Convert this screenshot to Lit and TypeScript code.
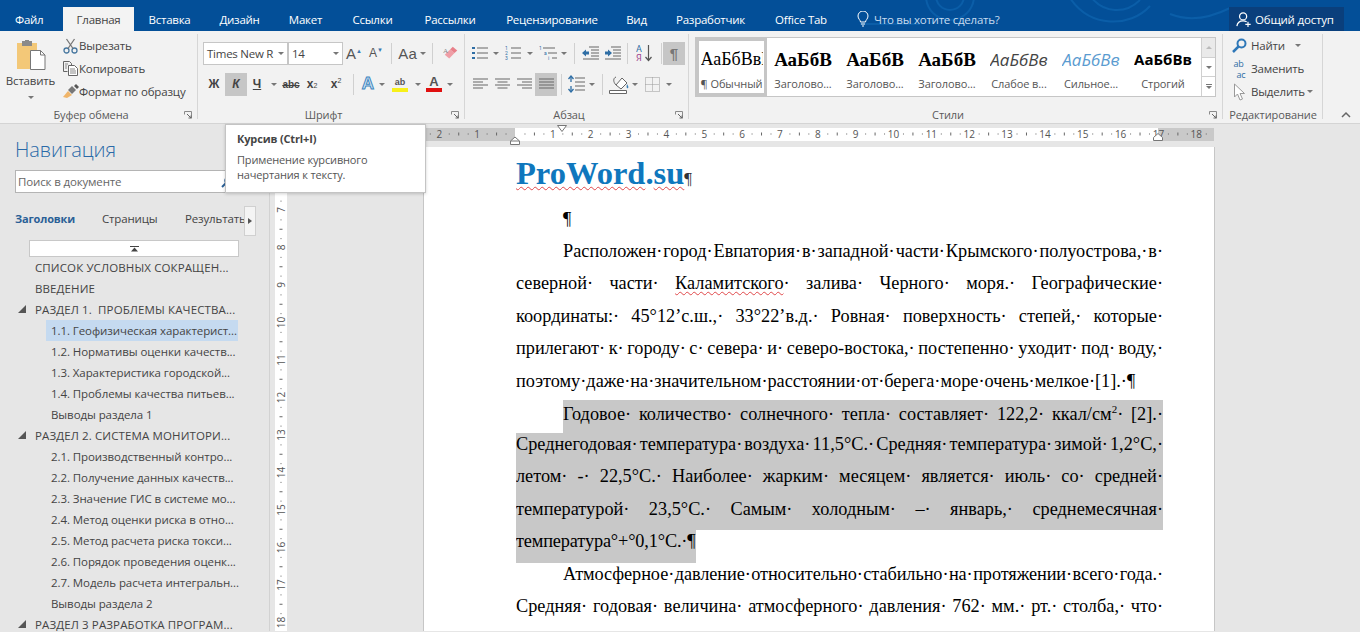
import { LitElement, html, css, svg } from "lit";
import { customElement } from "lit/decorators.js";

const cell = (w: number, c: unknown, cls = "") => html`<span class="cell ${cls}" style="width:${w}px">${c}</span>`;
const caret = html`<i class="caret"></i>`;
const sep = html`<i class="sep"></i>`;
const launcher = html`<svg class="launch" width="8" height="8" viewBox="0 0 8 8"><path d="M.5 .5h7v7M.5 .5v3M.5 .5" fill="none" stroke="#8a8a8a"/><path d="M3 3l4 4M4.5 7H7V4.5" fill="none" stroke="#666"/></svg>`;

const icPaste = html`<svg width="30" height="30" viewBox="0 0 30 30"><rect x="1" y="3" width="20" height="26" fill="#f3c878"/><rect x="6" y="1" width="10" height="5" fill="#8a8a8a"/><rect x="9" y="0" width="4" height="2" fill="#8a8a8a"/><path d="M14.500 10.500h10l4.500 4.500v14.500h-14.500z" fill="#fff" stroke="#777"/><path d="M24.500 10.500v4.500h4.500" fill="none" stroke="#777"/></svg>`;
const icCut = html`<svg width="15" height="16" viewBox="0 0 15 16"><circle cx="3.500" cy="12.500" r="2.500" fill="none" stroke="#47779f" stroke-width="1.300"/><circle cx="11.500" cy="12.500" r="2.500" fill="none" stroke="#47779f" stroke-width="1.300"/><path d="M5 10.500L11.500 1M10 10.500L3.500 1" stroke="#777" stroke-width="1.300" fill="none"/></svg>`;
const icCopy = html`<svg width="15" height="15" viewBox="0 0 15 15"><path d="M.5 .5h6l2 2v2M.5 .5v10h4" fill="none" stroke="#666"/><path d="M5.500 4.500h6l3 3v7h-9z" fill="#fff" stroke="#666"/><path d="M7 8h5M7 10h6M7 12h6M2 3h3M2 5h2M2 7h2" stroke="#888"/></svg>`;
const icBrush = html`<svg width="17" height="15" viewBox="0 0 17 15"><path d="M1 13l5-6 4 4-5 3z" fill="#f0b56a"/><path d="M6 6l4-4 4 4-4 4z" fill="#777"/><path d="M12 2l2-2 3 3-2 2z" fill="#555"/></svg>`;
const icEraser = html`<svg class="shift" width="18" height="17" viewBox="0 0 18 17"><path d="M2 10L8 4l5 4-6 6z" fill="#ef9ea6"/><path d="M8 4l3-3 5 4-3 3z" fill="#e8808a"/><text x="0" y="8" font-size="8" fill="#888" font-family="Liberation Serif">A</text></svg>`;
const icBullets = html`<svg width="16" height="16" viewBox="0 0 16 16"><path d="M5 3h11M5 8h11M5 13h11" stroke="#666"/><path d="M0 2h3v2H0zM0 7h3v2H0zM0 12h3v2H0z" fill="#2f6ea5"/></svg>`;
const icNum = html`<svg width="16" height="16" viewBox="0 0 16 16"><path d="M6 3h10M6 8h10M6 13h10" stroke="#666"/><text x="0" y="5" font-size="5" fill="#2f6ea5" font-family="Roboto">1</text><text x="0" y="10" font-size="5" fill="#2f6ea5" font-family="Roboto">2</text><text x="0" y="15" font-size="5" fill="#2f6ea5" font-family="Roboto">3</text></svg>`;
const icMulti = html`<svg width="20" height="16" viewBox="0 0 20 16"><path d="M4 3h12M9 8h9M13 13h5" stroke="#666"/><text x="0" y="5" font-size="5" fill="#2f6ea5" font-family="Roboto">1</text><text x="5" y="10" font-size="5" fill="#2f6ea5" font-family="Roboto">a</text><text x="9" y="15" font-size="5" fill="#2f6ea5" font-family="Roboto">i</text></svg>`;
const icOut = html`<svg width="17" height="14" viewBox="0 0 17 14"><path d="M7 1h10M9 4h8M9 7h8M9 10h8M1 13h16" stroke="#666"/><path d="M0 7l4-3.500v2h3v3h-3v2z" fill="#2f6ea5"/></svg>`;
const icIn = html`<svg width="17" height="14" viewBox="0 0 17 14"><path d="M7 1h10M9 4h8M9 7h8M9 10h8M1 13h16" stroke="#666"/><path d="M8 7l-4-3.500v2H1v3h3v2z" fill="#2f6ea5"/></svg>`;
const icSort = html`<svg width="17" height="20" viewBox="0 0 17 20"><text x="0" y="9" font-size="9" fill="#2f6ea5" font-family="Roboto">А</text><text x="0" y="18" font-size="9" fill="#a0478f" font-family="Roboto">Я</text><path d="M12.500 2v15M9.500 14l3 3.500 3-3.500" stroke="#555" fill="none" stroke-width="1.200"/></svg>`;
const al = (d: string) => html`<svg width="15" height="14" viewBox="0 0 15 14"><path d="${d}" stroke="#666" fill="none"/></svg>`;
const icLine = html`<svg width="17" height="18" viewBox="0 0 17 18"><path d="M7 3h10M7 7h10M7 11h10M7 15h10" stroke="#666"/><path d="M3 1v6M3 11v6" stroke="#2f6ea5" stroke-width="1.300"/><path d="M.5 4L3 1l2.500 3M.5 14L3 17l2.500-3" fill="none" stroke="#2f6ea5" stroke-width="1.300"/></svg>`;
const icFill = html`<svg width="20" height="20" viewBox="0 0 20 20"><path d="M7 11l6-7 5 5-6 6z" fill="#fff" stroke="#666"/><path d="M7 3c-3 1-3 5 0 8" fill="none" stroke="#666"/><path d="M18 10c1 2 2 3 1 4s-2 0-1-4z" fill="#3d7fb5"/><path d="M.5 16.500h17v3H.5z" fill="#fff" stroke="#666"/></svg>`;
const icBorders = html`<svg width="15" height="15" viewBox="0 0 15 15"><path d="M.5 .5h14v14H.5zM7.500 .5v14M.5 7.500h14" fill="none" stroke="#999" stroke-dasharray="1 1"/></svg>`;
const icFind = html`<svg width="15" height="15" viewBox="0 0 15 15"><circle cx="9.500" cy="5.500" r="4" fill="none" stroke="#2f78b8" stroke-width="2"/><path d="M6.500 8.500L1 14" stroke="#2f78b8" stroke-width="2.500"/></svg>`;
const icReplace = html`<span class="abac"><b>ab</b><u>ac</u></span>`;
const icSelect = html`<svg width="13" height="18" viewBox="0 0 13 18"><path d="M1.500 1v13l3-3 2.500 6 2.500-1-2.500-5.500h4.500z" fill="#fff" stroke="#999"/></svg>`;
const icShare = html`<svg width="16" height="17" viewBox="0 0 18 18"><circle cx="8" cy="5.500" r="4" fill="none" stroke="#fff" stroke-width="1.400"/><path d="M1 16.500c.5-4 3-6 7-6 2 0 3 .5 4 1" fill="none" stroke="#fff" stroke-width="1.400"/><path d="M13.500 11.500v6M10.500 14.500h6" stroke="#fff" stroke-width="1.300"/></svg>`;
const icBulb = html`<svg width="12" height="16" viewBox="0 0 12 16"><path d="M3.500 11c0-2-2.500-3-2.500-6a5 5 0 0 1 10 0c0 3-2.500 4-2.500 6z" fill="none" stroke="#fff"/><path d="M4 13h4M5 15h2" stroke="#fff"/></svg>`;

const tabs: [string, number][] = [["Файл", 63], ["Главная", 71], ["Вставка", 71], ["Дизайн", 69], ["Макет", 63], ["Ссылки", 71], ["Рассылки", 84], ["Рецензирование", 120], ["Вид", 49], ["Разработчик", 99], ["Office Tab", 82]];

const gallery: [string, string, string][] = [
  ["АаБбВвГ", "¶ Обычный", "s-normal sel"],
  ["АаБбВ", "Заголово...", "s-head"],
  ["АаБбВ", "Заголово...", "s-head"],
  ["АаБбВ", "Заголово...", "s-head"],
  ["АаБбВв", "Слабое в...", "s-weak"],
  ["АаБбВв", "Сильное...", "s-strong"],
  ["АаБбВв", "Строгий", "s-bold"],
];

const tree: [string, number, boolean, boolean][] = [
  ["СПИСОК УСЛОВНЫХ СОКРАЩЕН...", 1, false, false],
  ["ВВЕДЕНИЕ", 1, false, false],
  ["РАЗДЕЛ 1.  ПРОБЛЕМЫ КАЧЕСТВА...", 1, true, false],
  ["1.1. Геофизическая характерист...", 2, false, true],
  ["1.2. Нормативы оценки качеств...", 2, false, false],
  ["1.3. Характеристика городской...", 2, false, false],
  ["1.4. Проблемы качества питьев...", 2, false, false],
  ["Выводы раздела 1", 2, false, false],
  ["РАЗДЕЛ 2. СИСТЕМА МОНИТОРИ...", 1, true, false],
  ["2.1. Производственный контро...", 2, false, false],
  ["2.2. Получение данных качеств...", 2, false, false],
  ["2.3. Значение ГИС в системе мо...", 2, false, false],
  ["2.4. Метод оценки риска в отно...", 2, false, false],
  ["2.5. Метод расчета риска токси...", 2, false, false],
  ["2.6. Порядок проведения оценк...", 2, false, false],
  ["2.7. Модель расчета интегральн...", 2, false, false],
  ["Выводы раздела 2", 2, false, false],
  ["РАЗДЕЛ 3 РАЗРАБОТКА ПРОГРАМ...", 1, true, false],
];

const U = 37.85;
const hRuler = () => {
  const x0 = 245;
  const items = [];
  for (let n = -3; n <= 18; n++) {
    const x = x0 + U * n;
    if (n !== 0 && x > 150) items.push(svg`<text x="${x}" y="13.500" text-anchor="middle" font-size="10" fill="#555" font-family="Open Sans">${Math.abs(n)}</text>`);
    for (const [f, h] of [[0.25, 1], [0.5, 3], [0.75, 1]]) {
      const tx = x + U * f;
      if (tx > 156 && tx < 944) items.push(svg`<rect x="${tx}" y="${10 - h / 2}" width="1" height="${h}" fill="#666"/>`);
    }
  }
  return html`<svg class="hr" width="1090" height="23" viewBox="0 0 1090 23">
    <rect x="156" y="4" width="788" height="13" fill="#fff"/>
    <rect x="156" y="4" width="89" height="13" fill="#c9c9c9"/>
    <rect x="888" y="4" width="56" height="13" fill="#c9c9c9"/>
    ${items}
    <path d="M287.500 1.500h9l-4.500 6z" fill="#fff" stroke="#777"/>
    <path d="M240.500 20.500v-3.500l4.500-4 4.500 4v3.500zM240.500 17h9" fill="#fff" stroke="#777"/>
    <path d="M883.500 16.500v-3l4.500-4 4.500 4v3z" fill="#fff" stroke="#777"/>
  </svg>`;
};
const vRuler = () => {
  const items = [];
  for (let n = 7; n <= 18; n++) {
    const y = 211 - 148 + 37.5 * (n - 7);
    items.push(svg`<text transform="translate(10 ${y}) rotate(-90)" text-anchor="middle" font-size="10" fill="#555" font-family="Open Sans">${n}</text>`);
    for (const [f, w] of [[0.25, 1], [0.5, 3], [0.75, 1]]) {
      items.push(svg`<rect x="${6 - w / 2}" y="${y - 37.5 * f}" width="${w}" height="1" fill="#666"/>`);
    }
  }
  return html`<svg class="vr" width="12" height="484" viewBox="0 0 12 484"><rect width="12" height="484" fill="#fff"/>${items}</svg>`;
};

@customElement("app-root")
class AppRoot extends LitElement {
  static styles = css`
    :host { display: block; width: 1360px; height: 632px; overflow: hidden; position: relative; background: #e6e6e6; font-family: "Open Sans", sans-serif; font-size: 11.5px; color: #444; }
    * { box-sizing: border-box; }
    .top { height: 31px; background: #034f98; display: flex; align-items: flex-end; position: relative; color: #fff; overflow: hidden; }
    .swirl { position: absolute; left: 840px; top: 0; pointer-events: none; }
    .tab { height: 24px; display: flex; align-items: center; justify-content: center; font-size: 11.5px; letter-spacing: -.25px; position: relative; }
    .tab.first { justify-content: flex-start; padding-left: 15px; }
    .tab.on { background: #f3f3f3; color: #444; }
    .tell { display: flex; align-items: center; gap: 5px; height: 24px; padding-left: 15px; font-size: 11.5px; letter-spacing: -.25px; color: #c7dcf0; position: relative; }
    .share { position: absolute; left: 1229px; top: 7px; width: 115px; height: 24px; background: #0a3f7c; display: flex; align-items: center; gap: 3px; padding-left: 7px; font-size: 11.5px; letter-spacing: -.2px; }
    .ribbon { height: 93px; background: #f2f2f2; border-bottom: 1px solid #d4d4d4; display: flex; position: relative; }
    .g { position: relative; display: flex; flex-direction: column; }
    .g::after { content: ""; position: absolute; right: 0; top: 3px; bottom: 4px; width: 1px; background: #d6d6d6; }
    .g1 { width: 198px; } .g2 { width: 267px; } .g3 { width: 224px; } .g4 { width: 534px; } .g5 { width: 100px; }
    .glabel { position: absolute; left: 0; right: 16px; top: 76px; height: 16px; line-height: 16px; text-align: center; font-size: 11px; letter-spacing: -.1px; color: #5a5a5a; }
    .g5 .glabel { right: 0; }
    .launch { position: absolute; right: 6px; top: 80px; }
    .rows { display: flex; flex-direction: column; gap: 9px; padding: 11px 0 0 5px; }
    .row { display: flex; height: 22px; align-items: center; }
    .cell { display: inline-flex; align-items: center; justify-content: center; height: 23px; flex: none; }
    .on { background: #c6c6c6; }
    .shift { margin-left: 6px; }
    .caret { display: inline-block; width: 0; height: 0; border-left: 3px solid transparent; border-right: 3px solid transparent; border-top: 3px solid #777; }
    .sep { display: block; width: 1px; height: 21px; background: #d0d0d0; }
    .clip { display: flex; padding-top: 3px; }
    .paste { width: 60px; display: flex; flex-direction: column; align-items: center; padding: 6px 0 0 1px; letter-spacing: -.2px; }
    .paste .t { margin-top: 3px; line-height: 16px; }
    .paste .caret { margin-top: 7px; }
    .small { display: flex; flex-direction: column; margin-left: 2px; }
    .small div { height: 23px; display: flex; align-items: center; white-space: nowrap; letter-spacing: -.15px; }
    .small .ic { width: 17px; display: flex; justify-content: center; margin-right: 0; }
    .combo { background: #fff; border: 1px solid #c6c6c6; height: 23px; display: flex; align-items: center; padding: 0 3px 0 3px; justify-content: space-between; font-size: 11.5px; letter-spacing: -.25px; }
    .bi { font-family: "Liberation Sans", sans-serif; font-weight: 700; font-size: 12px; color: #444; }
    .it { font-style: italic; }
    .ul { text-decoration: underline; }
    .ser { font-family: "Liberation Sans", sans-serif; color: #555; }
    .big { font-size: 15px; } .mid { font-size: 12px; }
    .tiny { font-size: 6px; vertical-align: super; color: #3a78b0; }
    .abc { font-size: 10px; text-decoration: line-through; color: #444; font-family: "Liberation Sans", sans-serif; font-weight: 700; }
    .x { font-family: "Liberation Sans", sans-serif; font-weight: 700; font-size: 12px; color: #444; }
    .x small { font-size: 7px; font-weight: 400; }
    .x sup { font-size: 7px; font-weight: 400; line-height: 0; }
    .bar { display: inline-flex; flex-direction: column; align-items: center; font-family: "Liberation Sans", sans-serif; font-size: 13px; font-weight: 700; line-height: 12px; }
    .bar.red { color: #555; } .bar.red::after { content: ""; width: 16px; height: 4px; background: #e01010; }
    .bar.yel { font-size: 9px; color: #555; line-height: 11px; } .bar.yel::after { content: ""; width: 16px; height: 4px; background: #f7f01a; }
    .outa { font-family: "Liberation Sans", sans-serif; font-size: 17px; font-weight: 700; color: #d4e6f5; -webkit-text-stroke: 1px #3f86c0; }
    .pil { font-family: "Liberation Sans", sans-serif; font-size: 15px; font-weight: 700; color: #777; }
    .gallery { position: absolute; left: 6px; top: 6px; width: 521px; height: 60px; background: #fff; border: 1px solid #c6c6c6; display: flex; }
    .st { width: 72px; height: 58px; display: flex; flex-direction: column; align-items: center; overflow: hidden; flex: none; padding-top: 10px; }
    .st:first-child { width: 71px; }
    .st.sel { border: 3px solid #c6c6c6; padding-top: 7px; }
    .st .s { height: 26px; line-height: 23px; white-space: nowrap; overflow: hidden; color: #000; max-width: 62px; font-size: 18px; font-family: "Liberation Serif", serif; }
    .st .l { font-size: 11px; letter-spacing: -.1px; line-height: 16px; margin-top: 2px; white-space: nowrap; color: #555; }
    .s-head .s { font-weight: 700; font-size: 19px; max-width: 66px; }
    .s-weak .s { font-family: "Open Sans", sans-serif; font-style: italic; font-size: 17px; color: #444; }
    .s-strong .s { font-family: "Open Sans", sans-serif; font-style: italic; font-size: 17px; color: #5a9bd0; }
    .s-bold .s { font-family: "Open Sans", sans-serif; font-weight: 700; font-size: 15px; max-width: 58px; }
    .scroll { width: 14px; margin-left: auto; border-left: 1px solid #d0d0d0; display: flex; flex-direction: column; }
    .scroll span { flex: 1; display: flex; align-items: center; justify-content: center; border-bottom: 1px solid #d0d0d0; }
    .scroll span:first-child { background: #eaeaea; }
    .scroll span:first-child .caret { transform: rotate(180deg); border-top-color: #bbb; }
    .scroll .last { flex-direction: column; border-bottom: 0; gap: 1px; }
    .scroll .last::before { content: ""; width: 6px; height: 1px; background: #777; }
    .edit { display: flex; flex-direction: column; padding: 3px 0 0 9px; }
    .edit div { height: 23px; display: flex; align-items: center; letter-spacing: -.2px; gap: 4px; }
    .edit .ic { width: 15px; display: flex; justify-content: center; }
    .edit .caret { margin-left: 6px; }
    .edit .tight .caret { margin-left: -2px; }
    .abac { display: flex; flex-direction: column; font-size: 9px; line-height: 11px; color: #2f6ea5; }
    .abac b { font-weight: 400; } .abac u { text-decoration: none; margin-left: 3px; }
    .collapse { position: absolute; left: 1341px; top: 80px; }
    .main { display: flex; height: 507px; }
    .nav { width: 270px; flex: none; border-right: 1px solid #d2d2d2; padding: 12px 0 0 15px; display: flex; flex-direction: column; overflow: hidden; }
    .nav > * { flex: none; }
    .nav h1 { margin: 0; font-weight: 300; font-size: 20px; line-height: 28px; color: #2a6aa8; letter-spacing: -.1px; }
    .search { width: 235px; height: 23px; background: #fff; border: 1px solid #b4b4b4; margin-top: 6px; display: flex; align-items: center; padding-left: 2px; color: #666; justify-content: space-between; letter-spacing: -.15px; }
    .search svg { margin-right: 16px; }
    .ntabs { display: flex; align-items: center; height: 30px; margin-top: 10px; position: relative; letter-spacing: -.15px; white-space: nowrap; }
    .ntabs b { color: #2a5f96; width: 87px; font-weight: 700; font-size: 11px; }
    .ntabs span { width: 83px; }
    .more { position: absolute; left: 229px; top: 3px; width: 12px; height: 30px; background: #f4f4f4; border: 1px solid #d0d0d0; display: flex; align-items: center; justify-content: center; }
    .more i { border-top: 3px solid transparent; border-bottom: 3px solid transparent; border-left: 4px solid #555; }
    .collapser { width: 210px; height: 17px; background: #fff; border: 1px solid #c8c8c8; margin: 7px 0 0 14px; display: flex; align-items: center; justify-content: center; }
    .tree { margin: 0; padding: 0; list-style: none; }
    .node { height: 21px; display: flex; align-items: center; white-space: pre; color: #444; position: relative; width: 223px; }
    .l1 { padding-left: 20px; letter-spacing: .12px; }
    .l2 { padding-left: 36px; letter-spacing: -.08px; }
    .node.sel::before { content: ""; position: absolute; left: 31px; right: 0; top: 0; bottom: 0; background: #c5daf0; }
    .node span { position: relative; }
    .node svg { position: absolute; left: 3px; top: 6px; }
    .ws { flex: 1; display: flex; flex-direction: column; min-width: 0; }
    .hr { display: block; flex: none; }
    .wsrow { display: flex; flex: 1; min-height: 0; }
    .vr { margin-left: 5px; flex: none; display: block; }
    .page { width: 792px; margin-left: 136px; flex: none; background: #fff; border-left: 1px solid #c6c6c6; border-right: 1px solid #c6c6c6; padding: 8px 51px 0 92px; height: 484px; overflow: hidden; color: #000; font-family: "Liberation Serif", serif; }
    .title { height: 36px; display: flex; align-items: baseline; font-weight: 700; font-size: 32.500px; line-height: 36px; color: #0f77bd; white-space: nowrap; }
    .title .pm { font-size: 17px; color: #333; font-weight: 400; }
    .wavy { text-decoration: underline wavy #e0484a 1px; text-underline-offset: 2px; text-decoration-skip-ink: none; }
    .par { font-size: 18.300px; line-height: 23.500px; word-spacing: -.25em; }
    .empty { margin: 16.500px 0 0 47px; height: 30px; }
    .ln { display: block; height: 32.500px; text-align: justify; text-align-last: justify; overflow: hidden; }
    .ln.lo { line-height: 27px; }
    .ln.lo2 { line-height: 28.500px; }
    .ln.ind { margin-left: 47px; }
    .ln.sq { letter-spacing: -.09px; }
    .ln.end { text-align: left; text-align-last: left; white-space: nowrap; }
    .hl { background: #c8c8c8; }
    .ln.fit { width: 180px; letter-spacing: -.15px; }
    .par sup { font-size: 11px; line-height: 0; }
    .tip { position: absolute; left: 225px; top: 124px; width: 201px; height: 69px; background: #fff; border: 1px solid #c4c4c4; box-shadow: 0 1px 3px rgba(0,0,0,.18); padding: 6px 11px; font-size: 11px; letter-spacing: -.15px; color: #555; line-height: 15px; }
    .tip b { display: block; font-weight: 700; color: #444; margin-bottom: 6px; }
  `;

  render() {
    return html`
      <div class="top">
        <svg class="swirl" width="400" height="31" viewBox="0 0 400 31" fill="none" stroke="#0b5ea8" stroke-width="2"><circle cx="110" cy="-4" r="24"/><circle cx="110" cy="-4" r="14"/><path d="M230-2c20 30 60 30 80 8M250-4c14 18 36 18 50 4M20 24h60M330 14c20 8 40 4 60-6"/></svg>
        ${tabs.map(([t, w], i) => html`<div class="tab ${i === 0 ? "first" : ""} ${i === 1 ? "on" : ""}" style="width:${w}px">${t}</div>`)}
        <div class="tell">${icBulb}<span>Что вы хотите сделать?</span></div>
        <div class="share">${icShare}<span>Общий доступ</span></div>
      </div>
      <div class="ribbon">
        <section class="g g1">
          <div class="clip">
            <div class="paste">${icPaste}<span class="t">Вставить</span>${caret}</div>
            <div class="small">
              <div><span class="ic">${icCut}</span>Вырезать</div>
              <div><span class="ic">${icCopy}</span>Копировать</div>
              <div><span class="ic">${icBrush}</span>Формат по образцу</div>
            </div>
          </div>
          <div class="glabel">Буфер обмена</div>${launcher}
        </section>
        <section class="g g2">
          <div class="rows">
            <div class="row">
              ${cell(85, html`<span class="combo" style="width:85px">Times New R ${caret}</span>`)}
              ${cell(55, html`<span class="combo" style="width:55px">14 ${caret}</span>`)}
              ${cell(22, html`<span class="ser big">A<span class="tiny">▲</span></span>`)}
              ${cell(22, html`<span class="ser mid">A<span class="tiny">▼</span></span>`)}
              ${cell(9, sep)}
              ${cell(32, html`<span class="ser big">Аа</span>&nbsp;${caret}`)}
              ${cell(9, sep)}
              ${cell(22, icEraser)}
            </div>
            <div class="row">
              ${cell(22, html`<span class="bi">Ж</span>`)}
              ${cell(22, html`<span class="bi it">К</span>`, "on")}
              ${cell(20, html`<span class="bi ul">Ч</span>`)}
              ${cell(14, caret)}
              ${cell(20, html`<span class="abc">abc</span>`)}
              ${cell(22, html`<span class="x">x<small>2</small></span>`)}
              ${cell(26, html`<span class="x">x<sup>2</sup></span>`)}
              ${cell(8, sep)}
              ${cell(22, html`<span class="outa">A</span>`)}
              ${cell(6, caret)}
              ${cell(30, html`<span class="bar yel">ab</span>`)}
              ${cell(6, caret)}
              ${cell(26, html`<span class="bar red">A</span>`)}
              ${cell(6, caret)}
            </div>
          </div>
          <div class="glabel">Шрифт</div>${launcher}
        </section>
        <section class="g g3">
          <div class="rows">
            <div class="row">
              ${cell(20, icBullets)}${cell(12, caret)}${cell(22, icNum)}${cell(12, caret)}${cell(25, icMulti)}${cell(6, caret)}
              ${cell(14, sep)}${cell(18, icOut)}${cell(26, icIn)}${cell(4, sep)}${cell(30, icSort)}${cell(4, sep)}
              ${cell(22, html`<span class="pil">¶</span>`, "on")}
            </div>
            <div class="row">
              ${cell(20, al("M0 2h15M0 5h10M0 8h15M0 11h10"))}
              ${cell(24, al("M0 2h15M2.500 5h10M0 8h15M2.500 11h10"))}
              ${cell(20, al("M0 2h15M5 5h10M0 8h15M5 11h10"))}
              ${cell(1, "")}
              ${cell(22, al("M0 2h15M0 5h15M0 8h15M0 11h15"), "on")}
              ${cell(8, sep)}${cell(22, icLine)}${cell(9, caret)}${cell(12, sep)}${cell(22, icFill)}${cell(10, caret)}${cell(25, icBorders)}${cell(8, caret)}
            </div>
          </div>
          <div class="glabel">Абзац</div>${launcher}
        </section>
        <section class="g g4">
          <div class="gallery">
            ${gallery.map(([s, l, c]) => html`<div class="st ${c}"><span class="s">${s}</span><span class="l">${l}</span></div>`)}
            <div class="scroll"><span>${caret}</span><span>${caret}</span><span class="last">${caret}</span></div>
          </div>
          <div class="glabel">Стили</div>${launcher}
        </section>
        <section class="g g5">
          <div class="edit">
            <div><span class="ic">${icFind}</span>Найти ${caret}</div>
            <div><span class="ic">${icReplace}</span>Заменить</div>
            <div class="tight"><span class="ic">${icSelect}</span>Выделить${caret}</div>
          </div>
          <div class="glabel">Редактирование</div>
        </section>
        <svg class="collapse" width="10" height="7" viewBox="0 0 10 7"><path d="M1 6l4-4 4 4" fill="none" stroke="#666" stroke-width="1.500"/></svg>
      </div>
      <div class="main">
        <aside class="nav">
          <h1>Навигация</h1>
          <div class="search"><span>Поиск в документе</span><svg width="12" height="12" viewBox="0 0 12 12"><circle cx="7.500" cy="4.500" r="3.500" fill="none" stroke="#2a5f96" stroke-width="1.500"/><path d="M5 7l-4 4" stroke="#2a5f96" stroke-width="2"/></svg></div>
          <div class="ntabs"><b>Заголовки</b><span>Страницы</span><span>Результать</span><div class="more"><i></i></div></div>
          <div class="collapser"><svg width="9" height="6" viewBox="0 0 9 6"><path d="M0 0h9v1H0zM4.500 1.500L8 5.500H1z" fill="#444"/></svg></div>
          <ul class="tree">
            ${tree.map(([t, l, exp, sel]) => html`<li class="node l${l} ${sel ? "sel" : ""}">${exp ? html`<svg width="8" height="8" viewBox="0 0 8 8"><path d="M8 0v8H0z" fill="#555"/></svg>` : ""}<span>${t}</span></li>`)}
          </ul>
        </aside>
        <div class="ws">
          ${hRuler()}
          <div class="wsrow">
            ${vRuler()}
            <article class="page">
              <div class="title"><span class="wavy">ProWord</span><span>.</span><span class="wavy">su</span><span class="pm">¶</span></div>
              <div class="par">
                <div class="empty">¶</div>
                <div class="ln ind lo">Расположен· город· Евпатория· в· западной· части· Крымского· полуострова,· в·</div>
                <div class="ln lo">северной· части· <span class="wavy">Каламитского</span>· залива· Черного· моря.· Географические·</div>
                <div class="ln lo">координаты:· 45°12’с.ш.,· 33°22’в.д.· Ровная· поверхность· степей,· которые·</div>
                <div class="ln lo">прилегают· к· городу· с· севера· и· северо-востока,· постепенно· уходит· под· воду,·</div>
                <div class="ln end lo">поэтому· даже· на· значительном· расстоянии· от· берега· море· очень· мелкое· [1].· ¶</div>
                <div class="ln ind hl lo2">Годовое· количество· солнечного· тепла· составляет· 122,2· ккал/см<sup>2</sup>· [2].·</div>
                <div class="ln hl">Среднегодовая· температура· воздуха· 11,5°С.· Средняя· температура· зимой· 1,2°С,·</div>
                <div class="ln hl">летом· -· 22,5°С.· Наиболее· жарким· месяцем· является· июль· со· средней·</div>
                <div class="ln hl">температурой· 23,5°С.· Самым· холодным· –· январь,· среднемесячная·</div>
                <div class="ln end hl fit">температура°+°0,1°С.· ¶</div>
                <div class="ln ind sq">Атмосферное· давление· относительно· стабильно· на· протяжении· всего· года.·</div>
                <div class="ln">Средняя· годовая· величина· атмосферного· давления· 762· мм.· рт.· столба,· что·</div>
              </div>
            </article>
          </div>
        </div>
      </div>
      <div class="tip"><b>Курсив (Ctrl+I)</b>Применение курсивного<br />начертания к тексту.</div>
    `;
  }
}
